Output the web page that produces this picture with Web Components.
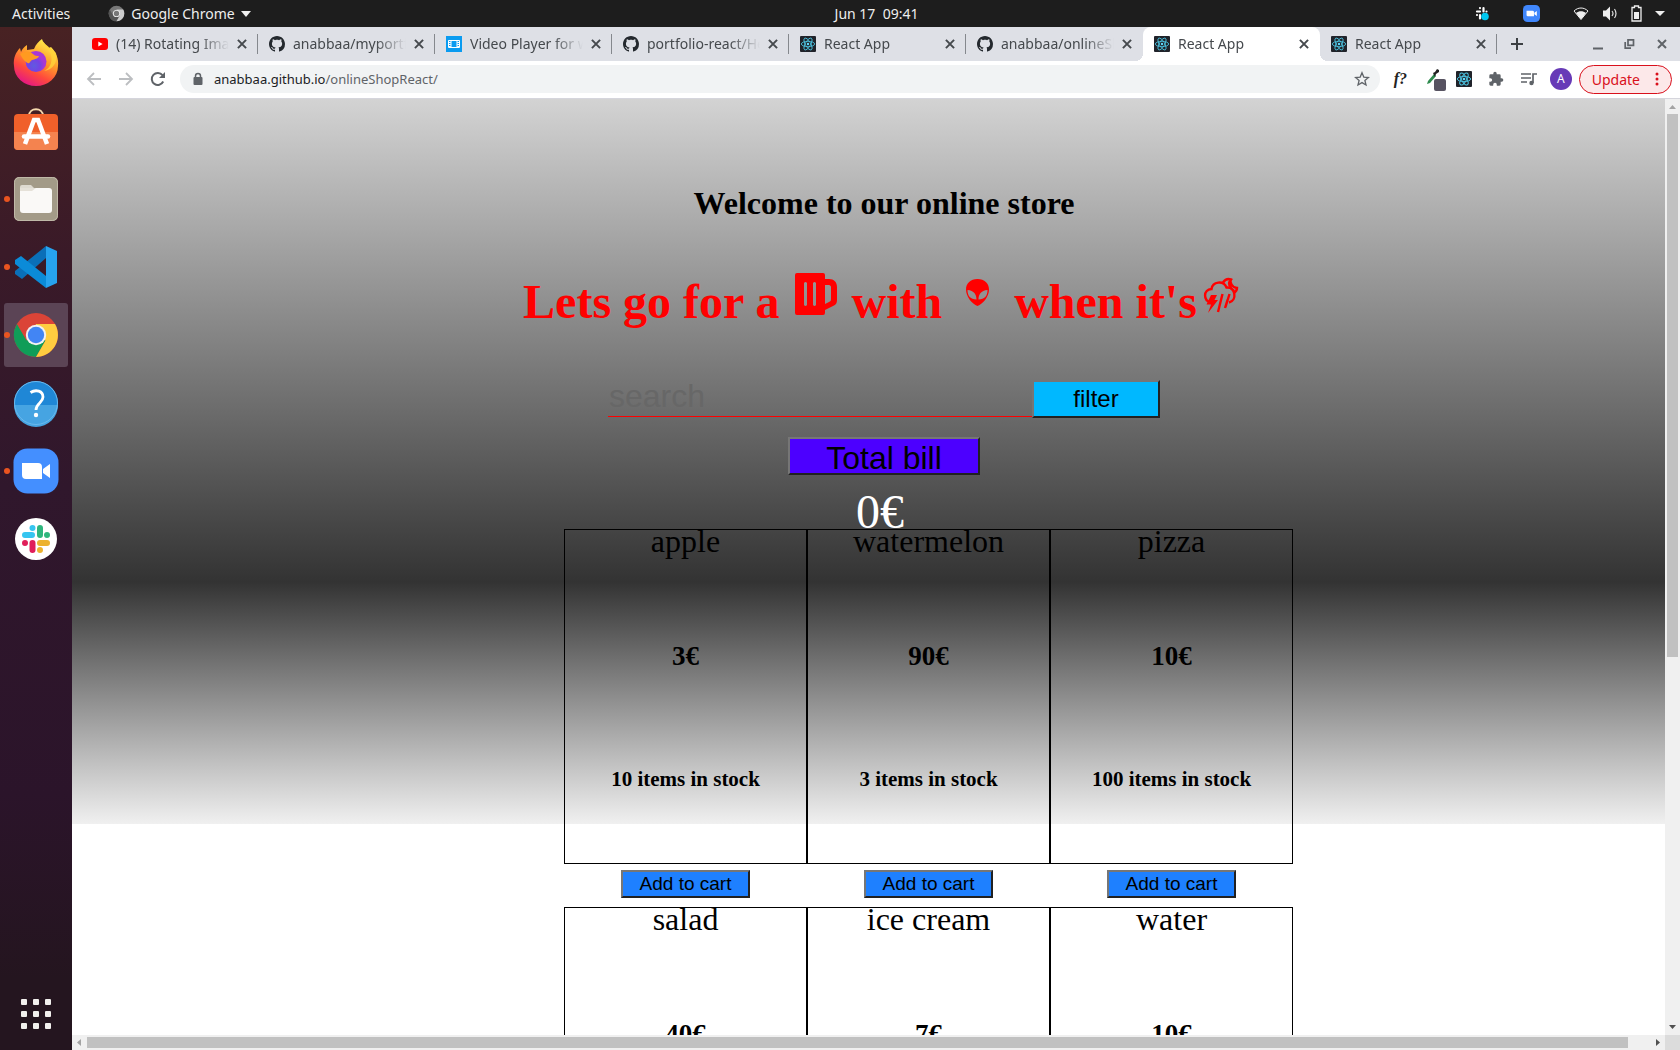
<!DOCTYPE html>
<html lang="en">
<head>
<meta charset="utf-8">
<title>React App</title>
<style>
html, body { height: 100%; margin: 0; }
body { overflow: hidden; font-family: "Noto Sans", sans-serif; }
</style>
</head>
<body>
<desktop-shell></desktop-shell>
<script>
function define(name, render) {
  customElements.define(name, class extends HTMLElement {
    connectedCallback() {
      if (this.shadowRoot) return;
      this.attachShadow({ mode: "open" }).innerHTML = render(this);
    }
  });
}

const atom = '<ellipse rx="10" ry="4"/><ellipse rx="10" ry="4" transform="rotate(60)"/><ellipse rx="10" ry="4" transform="rotate(120)"/>';
const icons = {
  react: `<svg viewBox="0 0 24 24"><rect width="24" height="24" rx="1.5" fill="#20232a"/><g transform="translate(12 12)" fill="none" stroke="#4cc3e0" stroke-width="1.3">${atom}<circle r="1.8" fill="#61dafb" stroke="none"/></g></svg>`,
  github: '<svg viewBox="0 0 16 16"><path fill="#24292e" d="M8 0C3.58 0 0 3.58 0 8c0 3.54 2.29 6.53 5.47 7.59.4.07.55-.17.55-.38 0-.19-.01-.82-.01-1.49-2.01.37-2.53-.49-2.69-.94-.09-.23-.48-.94-.82-1.13-.28-.15-.68-.52-.01-.53.63-.01 1.08.58 1.23.82.72 1.21 1.87.87 2.33.66.07-.52.28-.87.51-1.07-1.78-.2-3.64-.89-3.64-3.95 0-.87.31-1.59.82-2.15-.08-.2-.36-1.02.08-2.12 0 0 .67-.21 2.2.82.64-.18 1.32-.27 2-.27s1.36.09 2 .27c1.53-1.04 2.2-.82 2.2-.82.44 1.1.16 1.92.08 2.12.51.56.82 1.27.82 2.15 0 3.07-1.87 3.75-3.65 3.95.29.25.54.73.54 1.48 0 1.07-.01 1.93-.01 2.2 0 .21.15.46.55.38A8.01 8.01 0 0 0 16 8c0-4.42-3.58-8-8-8z"/></svg>',
  youtube: '<svg viewBox="0 0 16 16"><rect y="2" width="16" height="12" rx="3" fill="#f00"/><path d="M6.3 5.5v5L10.6 8z" fill="#fff"/></svg>',
  video: '<svg viewBox="0 0 16 16"><path fill="#0a9bf0" d="M0 0h16v16H0z"/><path fill="none" stroke="#fff" d="M2.500 4.500h11v7h-11zM5 4.500v7M11 4.500v7"/><path stroke="#fff" stroke-width="2" stroke-dasharray="1 1" d="M3.800 4v8M12.200 4v8"/></svg>',
  chrome: '<svg viewBox="0 0 48 48"><circle cx="24" cy="24" r="22" fill="#db4437"/><path fill="#0f9d58" d="M4.900 13A22 22 0 0 0 24 46l9.500-16.500L24 24l-9.500 5.500z"/><path fill="#ffcd40" d="M43 13H24v11l9.500 5.500L24 46a22 22 0 0 0 19-33z"/><circle cx="24" cy="24" r="10.200" fill="#f1f1f1"/><circle cx="24" cy="24" r="8.200" fill="#4285f4"/></svg>',
  chromeMono: '<svg viewBox="0 0 48 48"><circle cx="24" cy="24" r="22" fill="#777"/><path fill="#555" d="M4.900 13A22 22 0 0 0 24 46l9.500-16.500L24 24l-9.500 5.500z"/><path fill="#ccc" d="M43 13H24v11l9.500 5.500L24 46a22 22 0 0 0 19-33z"/><circle cx="24" cy="24" r="10.200" fill="#eee"/><circle cx="24" cy="24" r="7.600" fill="#777"/></svg>',
  firefox: '<svg viewBox="0 0 48 48"><defs><linearGradient id="f" x1=".8" y1=".05" x2=".3" y2="1"><stop stop-color="#fff44f"/><stop offset=".4" stop-color="#ff9a2a"/><stop offset=".7" stop-color="#ff4a3c"/><stop offset="1" stop-color="#e31587"/></linearGradient><radialGradient id="g" cx=".4" cy=".7"><stop stop-color="#5f5be0"/><stop offset=".6" stop-color="#7542e5"/><stop offset="1" stop-color="#a837d5"/></radialGradient></defs><g transform="translate(0 -2)"><path fill="url(#f)" d="M30 2c1 4 5 6 7 9l2-1c5 5 8 12 7 19a22 20 0 0 1-44 0C1 21 4 15 8 11l1 4c1-3 3-5 6-7v5l7-1c2-5 5-8 8-10z"/><circle cx="24" cy="24.500" r="10.500" fill="url(#g)"/><path fill="#ff9a20" d="M8 17c5-3 10-3 13 0 2 2 4 2 6 2-1 3-4 3-7 4-3 2-2 5-6 2-3-2-4-5-6-8z"/><path fill="#ffd43a" opacity=".8" d="M30 3c1 6 7 8 9 15 2 8-2 14-7 16 9-1 14-9 12-18-2-2-4-4-6-5-3-3-6-4-8-8z"/></g></svg>',
  software: '<svg viewBox="0 0 48 48"><g transform="translate(0 -2)"><path d="M17 11c0-9 14-9 14 0" fill="none" stroke="#f5d9ae" stroke-width="2"/><rect x="2" y="9" width="44" height="36" rx="4" fill="#f0602a"/><path d="M2 27h44v14a4 4 0 0 1-4 4H6a4 4 0 0 1-4-4z" fill="#f4834f"/><g stroke="#fff" fill="none"><path d="M13 39l9-24h4l9 24" stroke-width="4.500"/><path d="M12 31.500h24" stroke-width="4.500" stroke-linecap="round"/></g></g></svg>',
  files: '<svg viewBox="0 0 48 48"><rect x="2" y="2" width="44" height="44" rx="5" fill="#a39b88"/><rect x="2.500" y="2.500" width="43" height="43" rx="5" fill="none" stroke="#c0b9a8"/><path d="M8 12a2 2 0 0 1 2-2h9l4 4h6v10H8z" fill="#dedad0"/><rect x="8" y="13" width="32" height="25" rx="3" fill="#faf9f7"/><path d="M8 16h12l4-3H8z" fill="#e5e1d8"/></svg>',
  code: '<svg viewBox="0 0 48 48"><path fill="#0a6fb8" d="M34 3v12L10 36l-7-5v-3z"/><path fill="#0b8bd8" d="M34 45V33L9 13l-6 4v4z"/><path fill="#27a3ee" d="M34 3l11 5v32l-11 5z"/></svg>',
  help: '<svg viewBox="0 0 48 48"><circle cx="24" cy="24" r="22" fill="#1f87d6"/><path fill="#46a4e2" d="M2 26a22 22 0 0 0 44 0z"/><circle cx="24" cy="24" r="21.500" fill="none" stroke="#6bb9ec"/><path d="M18.500 13.500C24 10 31 12 31 18c0 6-7 6-7 13" fill="none" stroke="#fff" stroke-width="2.800"/><circle cx="24" cy="36" r="2.200" fill="#fff"/></svg>',
  zoom: '<svg viewBox="0 0 48 48"><rect x="1.500" y="1.500" width="45" height="45" rx="14" fill="#448fff"/><path fill="#fff" d="M10 16h16a4 4 0 0 1 4 4v12H14a4 4 0 0 1-4-4zM31 22l7-5v14l-7-5z"/></svg>',
  slack: '<svg viewBox="0 0 48 48"><circle cx="24" cy="24" r="21" fill="#fff"/><g stroke-width="6" stroke-linecap="round"><path stroke="#36c5f0" d="M13 20h7M20.500 13v0"/><path stroke="#2eb67d" d="M28 13v7M35 20v0"/><path stroke="#ecb22e" d="M28 28h7M28 35v0"/><path stroke="#e01e5a" d="M20.500 28v7M13 28v0"/></g></svg>',
  close: '<svg viewBox="0 0 12 12"><path d="M2.500 2.500l7 7M9.500 2.500l-7 7" stroke="#45494d" stroke-width="1.700"/></svg>'
};

define("desktop-shell", () => `
<style>
:host { display: flex; flex-direction: column; height: 100vh; }
.below { flex: 1; display: flex; min-height: 0; }
.window { flex: 1; min-width: 0; display: flex; flex-direction: column; }
</style>
<system-bar></system-bar>
<div class="below">
  <app-dock></app-dock>
  <div class="window">
    <tab-strip></tab-strip>
    <browser-toolbar></browser-toolbar>
    <scroll-frame><shop-page></shop-page></scroll-frame>
  </div>
</div>`);

define("system-bar", () => `
<style>
:host { display: flex; height: 27px; background: #1d1d1d; color: #eee; font-size: 14px; line-height: 27px; }
.side { flex: 1 1 0; display: flex; align-items: center; }
.left { padding-left: 12px; gap: 38px; }
.app { display: flex; align-items: center; gap: 6px; }
.app svg { width: 17px; height: 17px; }
.app .caret { width: 10px; height: 6px; }
.clock { padding-left: 76px; white-space: pre; }
.right { justify-content: flex-end; padding-right: 15px; }
.right svg { display: block; height: 17px; }
.gap { margin-right: 33px; }
.near { margin-right: 13px; }
</style>
<div class="side left"><span>Activities</span><span class="app">${icons.chromeMono}<span>Google Chrome</span><svg class="caret" viewBox="0 0 10 6"><path fill="#eee" d="M0 0h10L5 6z"/></svg></span></div>
<time class="clock">Jun 17  09:41</time>
<div class="side right">
<svg class="gap" width="16" viewBox="0 0 16 16"><g stroke="#fff" stroke-width="2.200" stroke-linecap="round"><path d="M3 6h3M6 2.500v.1M9.500 2.500v3.500M12.500 6v0M6 9.500v3.500M3 9.500v0"/></g><circle cx="11" cy="11" r="3.800" fill="#00c8f0"/></svg>
<svg class="gap" width="17" viewBox="0 0 48 48"><rect width="48" height="48" rx="13" fill="#4087fc"/><path fill="#fff" d="M10 16h17a4 4 0 0 1 4 4v12H14a4 4 0 0 1-4-4zM32 22l7-5v14l-7-5z"/></svg>
<svg class="near" width="16" viewBox="0 0 16 16"><path d="M1 5.500c4-4 10-4 14 0L8 14z" fill="none" stroke="#eee"/><path d="M3 7.500c3-2.500 7-2.500 10 0L8 14z" fill="#eee"/></svg>
<svg class="near" width="16" viewBox="0 0 16 16"><path d="M1 5h3l4-4v14l-4-4H1z" fill="#eee"/><path d="M10 5.500q2 2.500 0 5M12.500 3.500q3 4.500 0 9" fill="none" stroke="#ddd" stroke-width="1.200"/></svg>
<svg class="near" width="11" viewBox="0 0 11 17"><path d="M1 2.500h2.500V1h4v1.500H10V16H1z" fill="none" stroke="#eee" stroke-width="1.300"/><path d="M3 7h5v7H3z" fill="#eee"/></svg>
<svg width="10" viewBox="0 0 10 17"><path fill="#eee" d="M0 6h10l-5 5z"/></svg>
</div>`);

define("dock-item", el => `
<style>
:host { display: flex; align-items: center; height: 68px; position: relative; }
button { all: unset; width: 64px; height: 64px; margin: 0 4px; border-radius: 3px; display: flex; align-items: center; justify-content: center; }
:host([active]) button { background: #5b4455; }
:host([running])::before { content: ""; position: absolute; left: 4px; top: 31px; width: 6px; height: 6px; border-radius: 50%; background: #e95420; }
svg { width: 48px; height: 48px; }
</style>
<button aria-label="${el.getAttribute("icon")}">${icons[el.getAttribute("icon")]}</button>`);

define("app-dock", () => `
<style>
:host { display: flex; flex-direction: column; width: 72px; padding-top: 2px; box-sizing: border-box; background: linear-gradient(#482223, #3a1a28 22%, #30172c 45%, #2b142a 75%, #24151f 93%, #24151f); }
.grid { all: unset; margin: auto auto 21px; display: grid; grid-template-columns: repeat(3, 6px); gap: 6px; }
.grid i { height: 6px; background: #f2f0ee; border-radius: 1px; }
</style>
<dock-item icon="firefox"></dock-item><dock-item icon="software"></dock-item>
<dock-item icon="files" running></dock-item><dock-item icon="code" running></dock-item>
<dock-item icon="chrome" running active></dock-item><dock-item icon="help"></dock-item>
<dock-item icon="zoom" running></dock-item><dock-item icon="slack"></dock-item>
<button class="grid" aria-label="Show applications">${"<i></i>".repeat(9)}</button>`);

define("browser-tab", el => `
<style>
:host { display: flex; align-items: center; box-sizing: border-box; flex: 0 1 177px; min-width: 0; height: 34px; padding: 0 9px 0 11px; position: relative; color: #45494d; font-size: 14px; }
.icon { width: 16px; height: 16px; flex: none; }
.icon svg { display: block; width: 16px; height: 16px; }
.title { flex: 1; min-width: 0; margin: 0 6px 0 8px; padding-bottom: 2px; overflow: hidden; white-space: nowrap; -webkit-mask-image: linear-gradient(90deg, #000 calc(100% - 30px), transparent); }
button { all: unset; width: 14px; height: 14px; flex: none; }
button svg { display: block; }
:host([divider])::after { content: ""; position: absolute; right: 0; top: 7px; width: 1px; height: 20px; background: #85888d; }
:host([active]) { background: #fff; border-radius: 8px 8px 0 0; }
:host([active])::before { content: ""; position: absolute; left: -8px; right: -8px; bottom: 0; height: 8px; background: radial-gradient(circle at 0 0, transparent 8px, #fff 8px) left / 8px 8px no-repeat, radial-gradient(circle at 100% 0, transparent 8px, #fff 8px) right / 8px 8px no-repeat; }
</style>
<span class="icon">${icons[el.getAttribute("icon")]}</span><span class="title"><slot></slot></span><button aria-label="Close tab">${icons.close}</button>`);

define("tab-strip", () => `
<style>
:host { display: flex; align-items: center; height: 34px; padding: 0 11px 0 9px; background: #dee0e6; }
button { all: unset; display: block; }
button svg { display: block; }
.new { margin: 0 auto 0 13px; }
.controls { display: flex; gap: 18px; }
</style>
<browser-tab icon="youtube" divider>(14) Rotating Images</browser-tab>
<browser-tab icon="github" divider>anabbaa/myportfolio</browser-tab>
<browser-tab icon="video" divider>Video Player for web</browser-tab>
<browser-tab icon="github" divider>portfolio-react/Header</browser-tab>
<browser-tab icon="react" divider>React App</browser-tab>
<browser-tab icon="github">anabbaa/onlineShop</browser-tab>
<browser-tab icon="react" active>React App</browser-tab>
<browser-tab icon="react" divider>React App</browser-tab>
<button class="new" aria-label="New tab"><svg width="14" height="14"><path d="M7 1v12M1 7h12" stroke="#3c4043" stroke-width="2"/></svg></button>
<div class="controls">
<button aria-label="Minimise"><svg width="14" height="14"><path d="M2 11.500h10" stroke="#5f6368" stroke-width="2"/></svg></button>
<button aria-label="Restore"><svg width="14" height="14"><path d="M5 2.800h5.500v5.500H5zM2.200 5v6.200H8" fill="none" stroke="#5f6368" stroke-width="1.700"/></svg></button>
<button aria-label="Close"><svg width="14" height="14"><path d="M3 3l8 8M11 3l-8 8" stroke="#5f6368" stroke-width="2"/></svg></button>
</div>`);

define("browser-toolbar", () => `
<style>
:host { display: flex; align-items: center; box-sizing: border-box; height: 38px; padding: 0 8px 1px 14px; background: #fff; border-bottom: 1px solid #d5d5dc; }
button { all: unset; display: block; flex: none; }
svg { display: block; flex: none; }
.nav { display: flex; gap: 16px; margin-right: 14px; }
.omni { flex: 1; display: flex; align-items: center; height: 28px; padding: 0 10px 0 12px; border-radius: 14px; background: #f1f3f4; font-size: 13px; color: #5f6368; }
.omni a { flex: 1; margin-left: 10px; color: inherit; text-decoration: none; }
.omni b { color: #202124; font-weight: 400; }
.ext { display: flex; align-items: center; gap: 16px; margin: 0 7px 0 14px; }
.fn { font: italic 700 16px/20px "Liberation Serif", serif; color: #222; width: 18px; }
.pick { margin: 0 -6px 0 -2px; }
.avatar { width: 22px; height: 22px; border-radius: 50%; background: #673ab7; color: #fff; font-size: 12px; line-height: 22px; text-align: center; margin-left: -3px; }
.update { display: flex; align-items: center; gap: 14px; box-sizing: border-box; height: 29px; padding: 0 12px; border: 1px solid #d9101c; border-radius: 15px; background: #fce8e9; color: #d9101c; font-size: 14px; }
.update svg { margin-left: 1px; }
</style>
<div class="nav">
<button aria-label="Back"><svg width="16" height="16"><path d="M15 8H2.500M8 2L2 8l6 6" fill="none" stroke="#bcbec1" stroke-width="1.800"/></svg></button>
<button aria-label="Forward"><svg width="16" height="16"><path d="M1 8h12.500M8 2l6 6-6 6" fill="none" stroke="#bcbec1" stroke-width="1.800"/></svg></button>
<button aria-label="Reload"><svg width="16" height="16"><path d="M13.200 10.500a6 6 0 1 1-.7-6.300" fill="none" stroke="#5f6368" stroke-width="2"/><path d="M15 1v6H9z" fill="#5f6368"/></svg></button>
</div>
<div class="omni">
<svg width="12" height="14"><path d="M3.500 6V4a2.500 2.500 0 0 1 5 0v2" fill="none" stroke="#5f6368" stroke-width="1.500"/><rect x="1.500" y="5" width="9" height="8" rx="1" fill="#5f6368"/></svg>
<a href="#"><b>anabbaa.github.io</b>/onlineShopReact/</a>
<svg width="16" height="16" viewBox="0 0 16 16"><path d="M8 1.800l1.800 4.300 4.600.4-3.500 3 1.100 4.500L8 11.600 4 14l1.100-4.500-3.500-3 4.600-.4z" fill="none" stroke="#5f6368" stroke-width="1.300"/></svg>
</div>
<div class="ext">
<span class="fn">f?</span>
<svg class="pick" width="20" height="24" viewBox="0 0 20 24"><path d="M1 17l1-3 6-7 2 2-6 7z" fill="#2e8b4e"/><path d="M7 6l2-1 2-3 2 1v2l-3 2-1 3z" fill="#222"/><rect x="8" y="12" width="12" height="12" rx="2" fill="#575361"/></svg>
<svg width="16" height="16" viewBox="0 0 24 24"><rect width="24" height="24" rx="1.500" fill="#20232a"/><g transform="translate(12 12)" fill="none" stroke="#4cc3e0" stroke-width="1.500">${atom}<circle r="2" fill="#61dafb" stroke="none"/></g></svg>
<svg width="16" height="16" viewBox="0 0 24 24"><path fill="#5f6368" d="M20.500 11H19V7a2 2 0 0 0-2-2h-4V3.500a2.500 2.500 0 0 0-5 0V5H4a2 2 0 0 0-2 2v3.800h1.500a2.700 2.700 0 0 1 0 5.400H2V20c0 1.100.9 2 2 2h3.800v-1.500a2.700 2.700 0 0 1 5.400 0V22H17a2 2 0 0 0 2-2v-4h1.500a2.500 2.500 0 0 0 0-5z"/></svg>
<svg width="17" height="16"><path d="M1 3h10M1 7h10M1 11h6M13 12V3h4" fill="none" stroke="#5f6368" stroke-width="1.700"/><circle cx="11.500" cy="12" r="2.200" fill="#5f6368"/></svg>
<button class="avatar" aria-label="Profile">A</button>
</div>
<button class="update"><span>Update</span><svg width="4" height="14"><g fill="#d9101c"><circle cx="2" cy="2" r="1.500"/><circle cx="2" cy="7" r="1.500"/><circle cx="2" cy="12" r="1.500"/></g></svg></button>`);

define("scroll-frame", () => `
<style>
:host { flex: 1; min-height: 0; display: grid; grid-template: minmax(0, 1fr) 15px / minmax(0, 1fr) 15px; background: #fff; }
.view { overflow: hidden; }
.v, .h { background: #f0f0f0; display: flex; align-items: center; justify-content: space-between; }
.v { flex-direction: column; }
.v i { width: 11px; height: 58%; margin-bottom: auto; background: #c1c1c1; }
.h i { height: 11px; flex: 1; margin-right: 22px; background: #c1c1c1; }
.corner { background: #dcdcdc; }
svg { display: block; flex: none; }
</style>
<div class="view"><slot></slot></div>
<div class="v"><svg width="15" height="15"><path d="M4 10h7L7.500 6z" fill="#a3a3a3"/></svg><i></i><svg width="15" height="15"><path d="M4 5h7L7.500 9z" fill="#505050"/></svg></div>
<div class="h"><svg width="15" height="15"><path d="M9 4v7L5 7.500z" fill="#a3a3a3"/></svg><i></i><svg width="15" height="15"><path d="M6 4v7l4-3.500z" fill="#505050"/></svg></div>
<div class="corner"></div>`);

define("shop-product", el => `
<style>
:host { display: flex; flex-direction: column; align-items: center; width: 243px; }
article { box-sizing: border-box; width: 100%; height: 335px; border: 1px solid #000; text-align: center; }
h2, p { margin: 0; }
h2 { font-size: 32px; font-weight: 400; line-height: 22px; }
.price { margin: 89px 0 96px; font-size: 27px; line-height: 30px; font-weight: 700; }
.stock { font-size: 21px; line-height: 24px; font-weight: 700; }
button { box-sizing: border-box; width: 129px; height: 28px; margin: 6px 0 9px; padding: 0; background: #1e80ff; border: 2px solid; border-color: #767676 #212121 #212121 #767676; color: #000; font: 19px/22px "Liberation Sans", sans-serif; }
</style>
<article><h2>${el.getAttribute("name")}</h2><p class="price">${el.getAttribute("price")}€</p><p class="stock">${el.getAttribute("stock")} items in stock</p></article>
<button>Add to cart</button>`);

define("shop-page", () => `
<style>
:host { display: block; width: calc(100% + 31px); font-family: "Liberation Serif", serif; color: #000; background: linear-gradient(#d3d3d3, #333 66.6%, #f0f0f0) 0 0 / 100% 725px no-repeat; }
main { display: flex; flex-direction: column; align-items: center; padding-top: 86px; }
h1, h2 { margin: 0; white-space: nowrap; }
h1 { font-size: 32px; line-height: 36px; }
h2 { margin: 49px 0 48px; color: #f00; font-size: 48px; line-height: 56px; }
h2 svg { width: 48px; height: 48px; }
form { display: flex; align-items: flex-end; margin-bottom: 19px; }
input { box-sizing: border-box; width: 424px; height: 39px; margin: 0 0 1px; padding: 0 0 2px 1px; border: 0; border-bottom: 1px solid #f00; background: none; font: 32px "Liberation Sans", sans-serif; }
input::placeholder { color: #676767; opacity: 1; }
button { box-sizing: border-box; height: 38px; padding: 0; border: 2px solid; border-color: #767676 #212121 #212121 #767676; color: #000; font-family: "Liberation Sans", sans-serif; }
.filter { width: 128px; background: #00b8ff; font-size: 24px; }
.bill { width: 192px; background: #4c00ff; font-size: 32px; line-height: 34px; padding-top: 2px; }
output { margin-top: 19px; padding-right: 8px; color: #fff; font-size: 48px; line-height: 35px; }
.products { display: grid; grid-template-columns: repeat(3, auto); padding-left: 89px; }
</style>
<main>
<h1>Welcome to our online store</h1>
<h2>Lets go for a <svg viewBox="0 0 48 48"><path fill="currentColor" fill-rule="evenodd" d="M5 3h26a2 2 0 0 1 2 2v4h4c5 0 8 3 8 8v13c0 3-1 5-4 6l-8 4v3a2 2 0 0 1-2 2H5a2 2 0 0 1-2-2V5a2 2 0 0 1 2-2zm28 12v19l4-2c1.500-1 2-1 2-3V17c0-1-1-2-2-2zM12 13v22q1.500 2 3 0V13q-1.500-2-3 0zm9 0v22q1.500 2 3 0V13q-1.500-2-3 0z"/></svg> with <svg viewBox="0 0 48 48"><path fill="currentColor" fill-rule="evenodd" d="M23.500 9c7 0 11.500 4.500 11.500 10.500 0 7-6 14.500-11.500 16.500C18 34 12 26.500 12 19.500 12 13.500 16.500 9 23.500 9zM13.500 20c0 6 3 9.500 9 9.500 0-5-2.500-9-9-9.500zm20 0c-6.500.5-9 4.500-9 9.500 6 0 9-3.500 9-9.500z"/></svg> when it's<svg viewBox="0 0 48 48"><g fill="none" stroke="currentColor" stroke-width="2.400"><path d="M14 32.500c-8-2-8-13 .5-13.500 1-7.500 12-9 15-1.500 9-1 11 13 2.500 15"/><path d="M26 12.500c2-3 5-4 8-3-1.500 2 1 8.500 6 8.500 0 2-1.500 4-3.500 5M33 10c-2 4 0 8 4 11"/><path d="M25.500 24l-4.500 18M32.500 24l-4 13M30.500 30l-2.500 8"/></g><path fill="currentColor" d="M14 25h6l-2.500 5H21L11 43l3-8.500H9.500z"/></svg></h2>
<form onsubmit="return false"><input type="text" placeholder="search" aria-label="search"><button class="filter">filter</button></form>
<button class="bill">Total bill</button>
<output>0€</output>
<section class="products">
<shop-product name="apple" price="3" stock="10"></shop-product>
<shop-product name="watermelon" price="90" stock="3"></shop-product>
<shop-product name="pizza" price="10" stock="100"></shop-product>
<shop-product name="salad" price="40" stock="10"></shop-product>
<shop-product name="ice cream" price="7" stock="10"></shop-product>
<shop-product name="water" price="10" stock="10"></shop-product>
</section>
</main>`);
</script>
</body>
</html>
